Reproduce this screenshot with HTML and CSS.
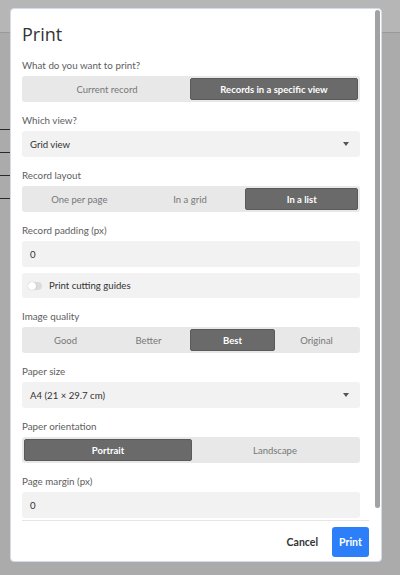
FILE: index.html
```html
<!DOCTYPE html>
<html lang="en">
<head>
  <meta charset="UTF-8">
  <meta name="viewport" content="width=device-width, initial-scale=1.0">
  <title>Print</title>
  <link rel="stylesheet" href="styles.css">
</head>
<body>
  <div class="backdrop">
    <div class="topbar"></div>
    <div class="table">
      <div class="row"></div>
      <div class="row"></div>
      <div class="row"></div>
      <div class="row"></div>
    </div>
  </div>

  <div class="dialog">
    <div class="scroll">
      <div class="content">
        <h1 class="title">Print</h1>

        <div class="field">
          <label>What do you want to print?</label>
          <div class="segmented">
            <span>Current record</span>
            <span class="active">Records in a specific view</span>
          </div>
        </div>

        <div class="field">
          <label>Which view?</label>
          <div class="select">
            <span>Grid view</span>
            <svg class="caret" width="6" height="4" viewBox="0 0 6 4"><path d="M0 0h6L3 4z" fill="#555"/></svg>
          </div>
        </div>

        <div class="field">
          <label>Record layout</label>
          <div class="segmented">
            <span>One per page</span>
            <span>In a grid</span>
            <span class="active">In a list</span>
          </div>
        </div>

        <div class="field">
          <label>Record padding (px)</label>
          <div class="input">0</div>
        </div>

        <div class="check">
          <span class="toggle"><span class="knob"></span></span>
          <span>Print cutting guides</span>
        </div>

        <div class="field">
          <label>Image quality</label>
          <div class="segmented">
            <span>Good</span>
            <span>Better</span>
            <span class="active">Best</span>
            <span>Original</span>
          </div>
        </div>

        <div class="field">
          <label>Paper size</label>
          <div class="select">
            <span>A4 (21 × 29.7 cm)</span>
            <svg class="caret" width="6" height="4" viewBox="0 0 6 4"><path d="M0 0h6L3 4z" fill="#555"/></svg>
          </div>
        </div>

        <div class="field">
          <label>Paper orientation</label>
          <div class="segmented">
            <span class="active">Portrait</span>
            <span>Landscape</span>
          </div>
        </div>

        <div class="field">
          <label>Page margin (px)</label>
          <div class="input">0</div>
        </div>
      </div>
      <div class="scrollbar"></div>
    </div>

    <div class="footer">
      <span class="cancel">Cancel</span>
      <button class="print-btn">Print</button>
    </div>
  </div>
</body>
</html>
```

FILE: styles.css
```css
* {
  margin: 0;
  padding: 0;
  box-sizing: border-box;
  font-family: Lato, "Open Sans", sans-serif;
}

body {
  width: 400px;
  height: 575px;
  overflow: hidden;
  background: #ababab;
}

.topbar {
  height: 33px;
  background: #b6b6b6;
  border-bottom: 1px solid #9a9a9a;
}

.table {
  width: 10px;
  padding-top: 74px;
}

.table .row {
  height: 23px;
  border-bottom: 1px solid #2a2a2a;
}

.dialog {
  position: absolute;
  left: 10px;
  top: 8px;
  width: 372px;
  height: 554px;
  background: #fff;
  border: 1px solid #d3dbe6;
  border-radius: 4px;
  display: flex;
  flex-direction: column;
}

.scroll {
  flex: 1;
  display: flex;
  overflow: hidden;
}

.content {
  width: 349px;
  padding: 13px 0 0 11px;
}

.scrollbar {
  width: 5px;
  margin: 1px 1px 12px auto;
  background: #a2a2a2;
  border-radius: 3px;
}

.title {
  font-family: "Open Sans", sans-serif;
  font-size: 18px;
  line-height: 24px;
  font-weight: 400;
  color: #333;
  margin-bottom: 12px;
}

.field {
  margin-bottom: 11px;
}

.field label {
  display: block;
  font-size: 9.8px;
  line-height: 14px;
  color: #5e5e5e;
  margin-bottom: 4px;
}

.segmented {
  display: flex;
  height: 26px;
  padding: 2px;
  background: #e8e8e8;
  border-radius: 3px;
}

.segmented span {
  flex: 1;
  display: flex;
  justify-content: center;
  align-items: center;
  font-size: 9.5px;
  color: #777;
  border-radius: 2px;
}

.segmented span.active {
  background: #6a6a6a;
  border: 1px solid #5a5a5a;
  color: #fff;
  font-weight: 700;
}

.select,
.input,
.check {
  display: flex;
  align-items: center;
  height: 26px;
  padding: 0 8px;
  background: #f2f2f2;
  border-radius: 3px;
  font-size: 9.6px;
  color: #333;
}

.select {
  justify-content: space-between;
}

.select .caret {
  margin-right: 3px;
}

.check {
  height: 25px;
  margin: -5px 0 11px;
  padding-left: 6px;
  gap: 7px;
}

.toggle {
  position: relative;
  width: 14px;
  height: 8px;
  border-radius: 4px;
  background: #dcdcdc;
}

.toggle .knob {
  position: absolute;
  left: 0;
  top: 0;
  width: 8px;
  height: 8px;
  border-radius: 50%;
  background: #fff;
  box-shadow: 0 0 1px rgba(0, 0, 0, 0.3);
}

.footer {
  display: flex;
  justify-content: flex-end;
  align-items: center;
  gap: 14px;
  margin: 0 12px 0 11px;
  padding: 6px 0 4px;
  border-top: 1px solid #e6e6e6;
}

.cancel {
  font-size: 10.5px;
  font-weight: 700;
  color: #333;
}

.print-btn {
  width: 37px;
  height: 30px;
  border: none;
  border-radius: 3px;
  background: #2d7ff9;
  color: #fff;
  font-size: 10.5px;
  font-weight: 700;
}
```
